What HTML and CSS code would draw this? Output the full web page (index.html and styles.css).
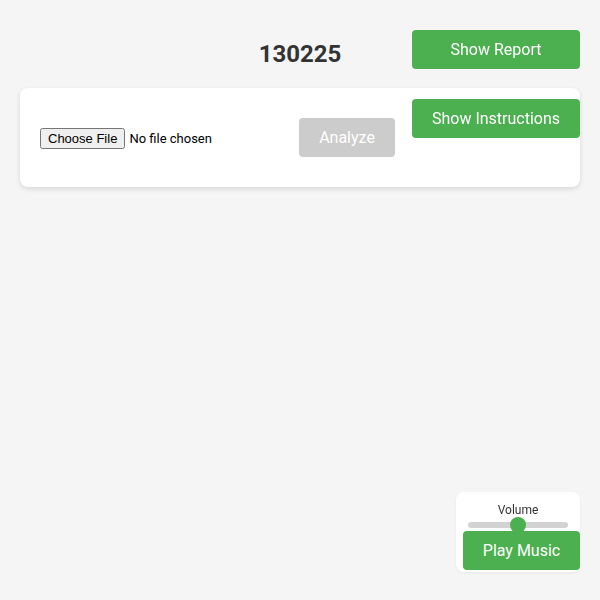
FILE: index.html
```html
<!DOCTYPE html>
<html>
<head>
<meta charset="utf-8">
<link rel="stylesheet" href="styles.css">
</head>
<body>
<div class="page">
  <h1 class="title">130225</h1>
  <div class="card">
    <div class="upload-row">
      <input type="file" class="file-input">
      <button class="btn btn-disabled" disabled>Analyze</button>
    </div>
  </div>
</div>
<div class="top-actions">
  <button class="btn btn-green btn-wide">Show Report</button>
  <button class="btn btn-green btn-wide">Show Instructions</button>
</div>
<div class="volume-panel">
  <label class="volume-label">Volume</label>
  <input type="range" class="volume-slider" min="0" max="100" value="50">
</div>
<button class="btn btn-green play-btn">Play Music</button>
</body>
</html>
```
FILE: styles.css
```css
html, body {
  margin: 0;
  padding: 0;
  background: #f5f5f5;
  font-family: Roboto, "Liberation Sans", sans-serif;
  color: #333;
}
.page {
  padding: 20px;
}
.title {
  margin: 20px 0;
  font-size: 24px;
  line-height: 28px;
  font-weight: 700;
  text-align: center;
  color: #333;
}
.card {
  background: #fff;
  border-radius: 8px;
  box-shadow: 0 2px 5px rgba(0,0,0,0.12);
  padding: 30px 20px 30px;
}
.upload-row {
  display: flex;
  align-items: center;
  gap: 20px;
}
.file-input {
  width: 239px;
  font-family: Roboto, "Liberation Sans", sans-serif;
  font-size: 13px;
  color: #000;
  margin-top: 2px;
}
.btn {
  font-family: Roboto, "Liberation Sans", sans-serif;
  font-size: 16px;
  line-height: 19px;
  padding: 10px 20px;
  border: none;
  border-radius: 4px;
  color: #fff;
  cursor: pointer;
}
.btn-green {
  background: #4caf50;
}
.btn-disabled {
  background: #cccccc;
  width: 96px;
  cursor: not-allowed;
}
.top-actions {
  position: fixed;
  top: 30px;
  right: 20px;
  display: flex;
  flex-direction: column;
  gap: 30px;
}
.btn-wide {
  width: 168px;
  padding: 10px 0;
}
.volume-panel {
  position: fixed;
  right: 20px;
  bottom: 28px;
  width: 100px;
  height: 62px;
  padding: 10px 12px 8px;
  background: #fff;
  border-radius: 8px;
  box-shadow: 0 1px 3px rgba(0,0,0,0.06);
  display: flex;
  flex-direction: column;
  align-items: center;
}
.volume-label {
  font-size: 12px;
  line-height: 16px;
  color: #333;
}
.volume-slider {
  -webkit-appearance: none;
  appearance: none;
  width: 100px;
  height: 6px;
  margin: 4px 0 0;
  background: #d3d3d3;
  border-radius: 3px;
  outline: none;
}
.volume-slider::-webkit-slider-thumb {
  -webkit-appearance: none;
  appearance: none;
  width: 16px;
  height: 16px;
  border-radius: 50%;
  background: #4caf50;
  border: none;
}
.play-btn {
  position: fixed;
  right: 20px;
  bottom: 30px;
  width: 117px;
  padding: 10px 0;
}
```
